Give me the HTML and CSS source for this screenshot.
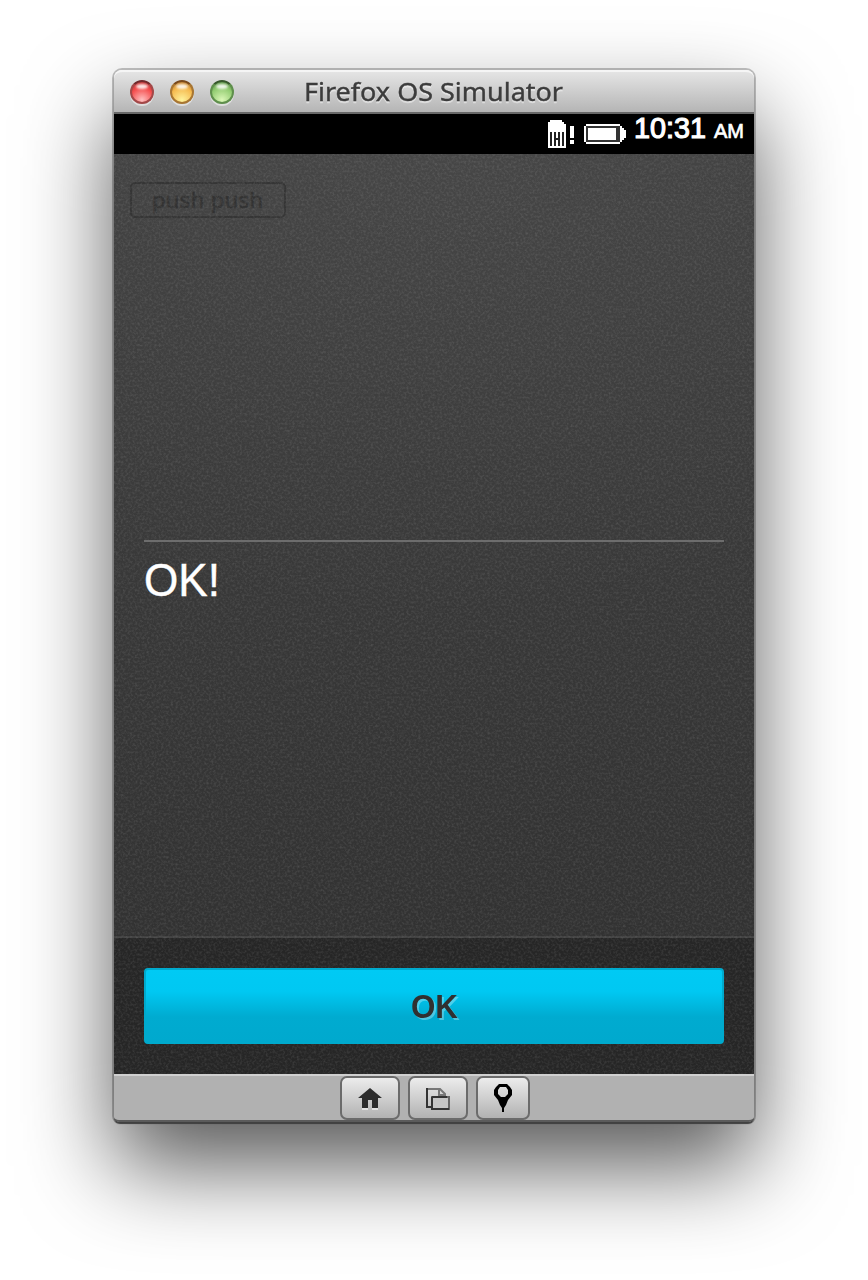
FILE: index.html
```html
<!DOCTYPE html>
<html lang="en">
<head>
<meta charset="utf-8">
<title>Firefox OS Simulator</title>
<link rel="stylesheet" href="styles.css">
</head>
<body>
<main class="window">
  <header class="titlebar">
    <div class="lights"><i class="light red"></i><i class="light amber"></i><i class="light green"></i></div>
    <svg class="title" width="264" height="40"><text x="2" y="28" textLength="259" lengthAdjust="spacingAndGlyphs">Firefox OS Simulator</text></svg>
  </header>
  <div class="status">
    <svg class="sim" width="28" height="28" viewBox="0 0 28 28" shape-rendering="crispEdges">
      <path d="M2 0h12v2h2v2h2v24H0V2h2z" fill="#fff"/>
      <path d="M2 12h2v14H2zM6 12h2v6h2v-6h2v14h-2v-6H8v6H6zM14 12h2v14h-2z" fill="#222"/>
      <path d="M22 6h4v12h-4zM22 20h4v4h-4z" fill="#fff"/>
    </svg>
    <svg class="battery" width="42" height="20" viewBox="0 0 42 20" shape-rendering="crispEdges">
      <path d="M2 0h34v2h2v2h2v2h2v8h-2v2h-2v2h-2v2H2v-2H0V2h2z" fill="#fff"/>
      <path d="M2 2h34v16H2z" fill="#333"/>
      <path d="M4 4h28v12H4z" fill="#fff"/>
    </svg>
    <svg class="clock" width="112" height="40"><text class="time" x="0" y="24" textLength="72" lengthAdjust="spacingAndGlyphs">10:31</text><text class="ampm" x="80" y="24" textLength="30" lengthAdjust="spacingAndGlyphs">AM</text></svg>
  </div>
  <section class="screen">
    <svg class="grain" width="640" height="920">
      <filter id="grain" x="0" y="0" width="100%" height="100%">
        <feTurbulence type="fractalNoise" baseFrequency=".42" numOctaves="2" seed="7"/>
        <feColorMatrix values="0 0 0 0 1  0 0 0 0 1  0 0 0 0 1  .22 0 0 0 -.09"/>
      </filter>
      <rect width="640" height="920" filter="url(#grain)"/>
    </svg>
    <div class="dialog">
      <button class="ghost"><svg width="116" height="32"><text x="2" y="24" textLength="111">push push</text></svg></button>
      <div class="message"><svg width="90" height="60"><text x="0" y="54" textLength="76" lengthAdjust="spacingAndGlyphs">OK!</text></svg></div>
    </div>
    <div class="actions"><button class="confirm"><svg width="52" height="44"><text x="3" y="34" textLength="47" lengthAdjust="spacingAndGlyphs">OK</text></svg></button></div>
  </section>
  <footer class="toolbar">
    <button class="tool"><svg width="24" height="22" viewBox="0 0 24 22"><path d="M12 0 24 10h-4v10h-6v-8h-4v8H4V10H0z" fill="#2d2d2d"/><path d="M4 21h6M14 21h6" stroke="#e4e4e4" stroke-width="2"/></svg></button>
    <button class="tool"><svg width="24" height="22" viewBox="0 0 24 22" fill="none" stroke-width="2"><path d="M5 19H1V1h11" stroke="#333"/><path d="M2 1h12l5 5v3M13 2v5h5" stroke="#777"/><path d="M6 9h17v12H6z" fill="#c5c5c5" stroke="#666"/><path d="M5 21h18M6 9v12M6 9h15" stroke="#333"/></svg></button>
    <button class="tool narrow"><svg width="18" height="28" viewBox="0 0 18 28"><path fill-rule="evenodd" d="M5 0h8l3 3 2 3v5l-4 5-2 5-2 3v4H8v-4l-2-3-2-5-4-5V6l2-3zM6 3 4 6v4l3 3h4l3-3V6l-2-3z"/></svg></button>
  </footer>
</main>
</body>
</html>
```

FILE: styles.css
```css
* { box-sizing: border-box; }
body { margin: 0; height: 1280px; overflow: hidden; padding: 70px 114px; background: #fff; font-family: "Liberation Sans", Arial, sans-serif; }
button { margin: 0; padding: 0; font: inherit; }
svg { display: block; flex: none; overflow: visible; }
.window { width: 640px; height: 1052px; border-radius: 8px 8px 6px 6px; box-shadow: 0 0 0 2px rgba(0,0,0,.23), 0 2px 1px #555, 0 44px 90px rgba(0,0,0,.66); }
.titlebar { position: relative; height: 44px; display: flex; align-items: center; justify-content: center; border-radius: 8px 8px 0 0; border-top: 2px solid #f5f5f5; border-bottom: 2px solid #686868; background: linear-gradient(#e4e4e4, #b5b5b5); }
.title { fill: #3c3c3c; stroke: #3c3c3c; stroke-width: .4px; font: 26px "Noto Sans", "Open Sans", sans-serif; filter: drop-shadow(0 2px 0 rgba(255,255,255,.45)); }
.title { margin-top: 2px; }
.lights { position: absolute; left: 16px; top: 8px; display: flex; gap: 16px; }
.light { width: 24px; height: 24px; border-radius: 50%; box-shadow: 0 2px 0 rgba(255,255,255,.5); }
.light::before { content: ""; display: block; width: 12px; height: 5px; margin: 2px auto; border-radius: 50%; background: #fff; opacity: .85; filter: blur(1px); }
.red { border: 2px solid #a34848; border-top-color: #70282b; background: radial-gradient(circle at 50% 90%, #ffc1c1, #f44c4c 60%, #a52b2d); }
.amber { border: 2px solid #a87632; border-top-color: #79491b; background: radial-gradient(circle at 50% 90%, #fff39c, #f5b94e 60%, #a66420); }
.green { border: 2px solid #5f8f4c; border-top-color: #36582b; background: radial-gradient(circle at 50% 90%, #dcf8b8, #91cb70 60%, #477c37); }
.status { height: 40px; display: flex; justify-content: flex-end; align-items: flex-start; padding-right: 8px; background: #000; }
.sim { margin: 6px 8px 0 0; }
.battery { margin: 10px 8px 0 0; }
.clock { fill: #fff; }
.time { font-size: 30px; stroke: #fff; stroke-width: 1.2px; }
.ampm { font-size: 21px; stroke: #fff; stroke-width: .7px; }
.screen { position: relative; height: 920px; display: flex; flex-direction: column; background: radial-gradient(ellipse 640px 480px at 50% 0, rgba(255,255,255,.035), transparent), linear-gradient(#404040, #323232 85%); }
.grain { position: absolute; inset: 0; pointer-events: none; }
.dialog { height: 784px; padding: 28px 30px 0 16px; border-bottom: 2px solid #424242; }
.ghost { display: flex; align-items: center; justify-content: center; width: 156px; height: 36px; border: 2px solid #353535; border-radius: 5px; background: transparent; }
.ghost svg { fill: #323232; stroke: #323232; stroke-width: .5px; font: 22px "Noto Sans", "Open Sans", sans-serif; }
.message { position: relative; margin: 322px 0 0 14px; border-top: 2px solid #6d6d6d; color: #fff; }
.message svg { fill: #fff; stroke: #fff; stroke-width: .4px; font-size: 46px; }
.actions { height: 136px; padding: 30px; background: rgba(0,0,0,.23); }
.confirm { position: relative; display: flex; align-items: center; justify-content: center; width: 580px; height: 76px; border: 2px solid #00aacd; border-radius: 4px; background: linear-gradient(#00caf4 0, #00c8f2 30%, #00abd0 65%, #00a9ce); }
.confirm svg { fill: #303030; font-size: 34px; font-weight: bold; filter: drop-shadow(2px 2px 0 rgba(255,255,255,.3)); }
.toolbar { height: 48px; display: flex; justify-content: center; align-items: flex-start; gap: 8px; padding-left: 2px; border-top: 2px solid #d0d0d0; border-bottom: 2px solid #5b5b5b; border-radius: 0 0 5px 5px; background: #b1b1b1; }
.tool { display: flex; align-items: center; justify-content: center; width: 60px; height: 44px; padding-top: 2px; border: 2px solid #6b6b6b; border-radius: 7px; background: linear-gradient(#ececec, #b2b2b2); }
.narrow { width: 54px; padding-top: 0; }
```
